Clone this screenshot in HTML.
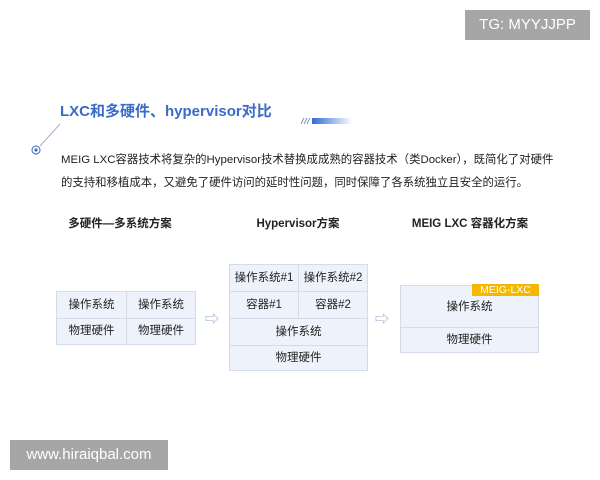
<!DOCTYPE html>
<html><head><meta charset="utf-8"><style>
body{margin:0;width:600px;height:480px;background:#fff;position:relative;overflow:hidden;font-family:"Liberation Sans","Noto Sans CJK SC",sans-serif;color:#222}
.a{position:absolute}
.badge{background:#a6a6a6;color:#fff;font-size:15px;text-align:center;line-height:30px}
.title{left:60px;top:100px;font-size:15px;font-weight:bold;color:#3a6bc8}
.p{left:61px;font-size:11.4px;color:#222;white-space:nowrap}
.h{top:215px;font-size:11.5px;font-weight:bold;text-align:center;width:180px}
.c{position:absolute;background:#eef3fb;border:1px solid #d4dcea;box-sizing:border-box;font-size:11.5px;text-align:center;color:#222}
.arr{font-size:14px;color:#8aa0c8}
</style></head><body>
<div class="a badge" style="left:465px;top:10px;width:125px;height:30px">TG: MYYJJPP</div>
<div class="a badge" style="left:10px;top:440px;width:158px;height:30px">www.hiraiqbal.com</div>
<div class="a title">LXC和多硬件、hypervisor对比</div>
<svg class="a" style="left:0;top:0" width="600" height="200">
<defs><linearGradient id="g" x1="0" x2="1"><stop offset="0" stop-color="#9fb0c8"/><stop offset="1" stop-color="#d0d8e4"/></linearGradient>
<linearGradient id="b" x1="0" x2="1"><stop offset="0" stop-color="#2f6bd8"/><stop offset="1" stop-color="#2f6bd8" stop-opacity="0"/></linearGradient></defs>
<line x1="60" y1="123" x2="350" y2="123" stroke="url(#g)" stroke-width="1.5"/>
<line x1="60" y1="124" x2="40" y2="146" stroke="#9fb0c8" stroke-width="1"/>
<circle cx="36" cy="150" r="4" fill="#fff" stroke="#5b7fc0" stroke-width="1.2"/>
<circle cx="36" cy="150" r="1.6" fill="#3a6bc8"/>
<path d="M301 124l3-6M304 124l3-6M307 124l3-6" stroke="#7a96c8" stroke-width="1"/>
<rect x="312" y="118" width="40" height="6" fill="url(#b)"/>
</svg>
<div class="a p" style="top:151px">MEIG LXC容器技术将复杂的Hypervisor技术替换成成熟的容器技术（类Docker），既简化了对硬件</div>
<div class="a p" style="top:174px">的支持和移植成本，又避免了硬件访问的延时性问题，同时保障了各系统独立且安全的运行。</div>
<div class="a h" style="left:30px">多硬件—多系统方案</div>
<div class="a h" style="left:208px">Hypervisor方案</div>
<div class="a h" style="left:380px">MEIG LXC 容器化方案</div>

<div class="c" style="left:56px;top:291px;width:71px;height:28px;line-height:26px">操作系统</div>
<div class="c" style="left:126px;top:291px;width:70px;height:28px;line-height:26px">操作系统</div>
<div class="c" style="left:56px;top:318px;width:71px;height:27px;line-height:25px">物理硬件</div>
<div class="c" style="left:126px;top:318px;width:70px;height:27px;line-height:25px">物理硬件</div>
<div class="a arr" style="left:205px;top:309px">⇨</div>

<div class="c" style="left:229px;top:264px;width:70px;height:28px;line-height:26px">操作系统#1</div>
<div class="c" style="left:298px;top:264px;width:70px;height:28px;line-height:26px">操作系统#2</div>
<div class="c" style="left:229px;top:291px;width:70px;height:28px;line-height:26px">容器#1</div>
<div class="c" style="left:298px;top:291px;width:70px;height:28px;line-height:26px">容器#2</div>
<div class="c" style="left:229px;top:318px;width:139px;height:28px;line-height:26px">操作系统</div>
<div class="c" style="left:229px;top:345px;width:139px;height:26px;line-height:24px">物理硬件</div>
<div class="a arr" style="left:375px;top:309px">⇨</div>

<div class="c" style="left:400px;top:285px;width:139px;height:43px;line-height:42px">操作系统</div>
<div class="c" style="left:400px;top:327px;width:139px;height:26px;line-height:24px">物理硬件</div>
<div class="a" style="left:472px;top:284px;width:67px;height:12px;background:#f5b800;color:#fff;font-size:10.5px;line-height:12px;text-align:center">MEIG-LXC</div>
</body></html>
